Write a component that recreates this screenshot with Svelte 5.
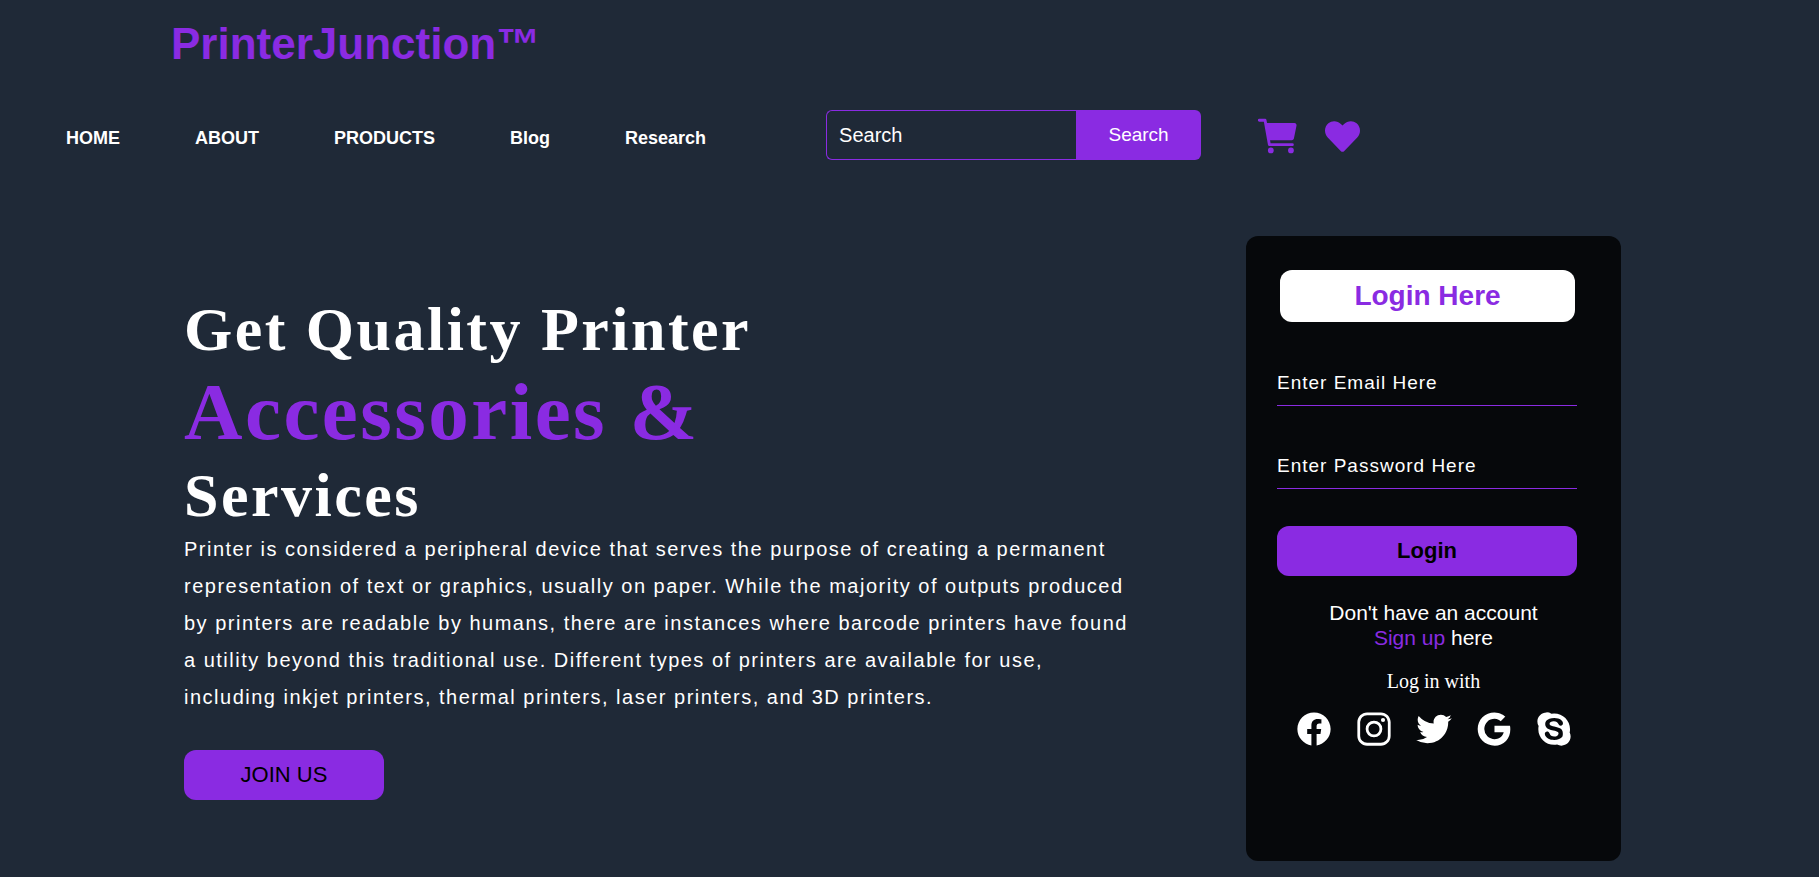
<script>
  const links = ['HOME', 'ABOUT', 'PRODUCTS', 'Blog', 'Research'];

  const socials = [
    {
      name: 'Facebook',
      path: 'M480 257.35c0-123.7-100.3-224-224-224s-224 100.3-224 224c0 111.8 81.9 204.47 189 221.29V322.12h-56.89v-64.77H221V208c0-56.13 33.45-87.16 84.61-87.16 24.51 0 50.15 4.38 50.15 4.38v55.13H327.5c-27.81 0-36.51 17.26-36.51 35v42h62.12l-9.92 64.77H291v156.54c107.1-16.81 189-109.48 189-221.31z'
    },
    {
      name: 'Instagram',
      path: 'M349.33 69.33a93.62 93.62 0 0193.34 93.34v186.66a93.62 93.62 0 01-93.34 93.34H162.67a93.62 93.62 0 01-93.34-93.34V162.67a93.62 93.62 0 0193.34-93.34h186.66m0-37.33H162.67C90.8 32 32 90.8 32 162.67v186.66C32 421.2 90.8 480 162.67 480h186.66C421.2 480 480 421.2 480 349.33V162.67C480 90.8 421.2 32 349.33 32zM377.33 162.67a28 28 0 1128-28 27.94 27.94 0 01-28 28zM256 181.33A74.67 74.67 0 11181.33 256 74.75 74.75 0 01256 181.33m0-37.33a112 112 0 10112 112 112 112 0 00-112-112z'
    },
    {
      name: 'Twitter',
      path: 'M496 109.5a201.8 201.8 0 01-56.55 15.3 97.51 97.51 0 0043.33-53.6 197.74 197.74 0 01-62.56 23.5A99.14 99.14 0 00348.31 64c-54.42 0-98.46 43.4-98.46 96.9a93.21 93.21 0 002.54 22.1 280.7 280.7 0 01-203-101.3A95.69 95.69 0 0036 130.4c0 33.6 17.53 63.3 44 80.7A97.5 97.5 0 0135.22 199v1.2c0 47 34 86.1 79 95a100.76 100.76 0 01-25.94 3.4 94.38 94.38 0 01-18.51-1.8c12.51 38.5 48.92 66.5 92.05 67.3A199.59 199.59 0 0139.5 405.6a203 203 0 01-23.5-1.4A278.68 278.68 0 00166.74 448c181.36 0 280.44-147.7 280.44-275.8 0-4.2-.11-8.4-.31-12.5A198.48 198.48 0 00496 109.5z'
    },
    {
      name: 'Google',
      path: 'M473.16 221.48l-2.26-9.59H262.46v88.22H387c-12.93 61.4-72.93 93.72-121.94 93.72-35.66 0-73.25-15-98.13-39.11a140.08 140.08 0 01-41.8-98.88c0-37.16 16.7-74.33 41-98.78s61-38.13 97.49-38.13c41.79 0 71.74 22.19 82.94 32.31l62.69-62.36C390.86 72.72 340.34 32 261.6 32c-60.75 0-119 23.27-161.58 65.71C58 139.5 36.25 199.93 36.25 256s20.58 113.48 61.3 155.6c43.51 44.92 105.13 68.4 168.58 68.4 57.73 0 112.45-22.62 151.45-63.66 38.34-40.4 58.17-96.3 58.17-154.9 0-24.67-2.48-39.32-2.59-39.96z'
    },
    {
      name: 'Skype',
      path: 'M467.16 303.6a205.69 205.69 0 004.9-45.15c0-116.32-95.69-210.7-213.79-210.7a221.83 221.83 0 00-36.52 3A123.58 123.58 0 00155.93 32C87.55 32 32 86.72 32 154.15A119.56 119.56 0 0049 216a211.16 211.16 0 00-4.32 42.35c0 116.44 95.69 210.7 213.67 210.7a214 214 0 0039.09-3.5A125.45 125.45 0 00356.07 480C424.57 480 480 425.28 480 357.97a118.63 118.63 0 00-12.84-54.37zM368 359c-9.92 13.76-24.51 24.73-43.41 32.43S283.36 403 257.69 403c-30.69 0-56.36-5.37-76.55-15.87a101 101 0 01-35.24-30.8c-9.11-12.83-13.66-25.66-13.66-38 0-7.7 3-14.35 8.87-19.95 5.84-5.37 13.42-8.17 22.29-8.17 7.35 0 13.65 2.1 18.79 6.42 4.9 4.08 9.1 10.15 12.48 18.08A108.09 108.09 0 00207 336.15c4.32 6 10.38 11 18.32 14.93 7.94 3.85 18.67 5.83 31.74 5.83 18.09 0 32.79-3.85 44-11.32 11.09-7.47 16.45-16.45 16.45-27.3 0-8.64-2.8-15.4-8.52-20.77s-13.65-9.57-23.34-12.37c-9.92-3-23.34-6.18-40-9.68-22.52-4.67-41.54-10.27-56.94-16.69-15.63-6.42-28.24-15.4-37.46-26.84-9.38-11.55-13.93-25.9-13.93-42.94 0-16.22 4.9-30.8 14.82-43.4 9.8-12.6 24-22.4 42.47-29.16 18.32-6.77 40.14-10 65.22-10 20 0 37.58 2.33 52.16 6.88s27 10.73 36.64 18.31 16.92 15.75 21.35 24.27 6.77 17 6.77 25.2c0 7.58-2.92 14.58-8.75 20.65a29.16 29.16 0 01-22 9.22c-8 0-14.35-2-18.79-5.6s-8.75-9.8-13.65-18.43c-5.83-10.85-12.83-19.37-20.89-25.44-8-6-21.23-9-39.78-9-17.15 0-31.16 3.39-41.54 10.15-10.15 6.65-15.17 14.47-15.17 23.57a20.56 20.56 0 004.44 13.19 35.27 35.27 0 0012.72 9.68 87.35 87.35 0 0016.92 6.42c5.83 1.52 15.63 4 29.16 7 17.15 3.73 32.9 7.7 46.9 12.13s26.14 9.8 36.06 16.22c10.15 6.42 18.08 14.7 23.8 24.73s8.52 22.29 8.52 36.76A86.23 86.23 0 01368 359z'
    }
  ];
</script>

<header>
  <a class="logo" href="#home">PrinterJunction™</a>
  <div class="bar">
    <nav>
      {#each links as link}
        <a href="#{link.toLowerCase()}">{link}</a>
      {/each}
    </nav>
    <form class="search" role="search">
      <input type="search" placeholder="Search" aria-label="Search" />
      <button type="button">Search</button>
    </form>
    <div class="shortcuts">
      <a href="#cart" aria-label="Cart">
        <svg class="cart" viewBox="0 0 512 512" aria-hidden="true">
          <circle cx="176" cy="416" r="32" />
          <circle cx="400" cy="416" r="32" />
          <path d="M456.8 120.78a23.92 23.92 0 00-18.56-8.78H133.89l-6.13-34.78A16 16 0 00112 64H48a16 16 0 000 32h50.58l45.66 258.78A16 16 0 00160 368h256a16 16 0 000-32H173.42l-5.64-32h241.66A24.07 24.07 0 00433 284.71l28.8-144a24 24 0 00-5-19.93z" />
        </svg>
      </a>
      <a href="#wishlist" aria-label="Wishlist">
        <svg class="heart" viewBox="0 32 512 448" aria-hidden="true">
          <path d="M462.3 62.6C407.5 15.9 326 24.3 275.7 76.2L256 96.5l-19.7-20.3C186.1 24.3 104.5 15.9 49.7 62.6c-62.8 53.6-66.1 149.8-9.9 207.9l193.5 199.8c12.5 12.9 32.8 12.9 45.3 0l193.5-199.8c56.3-58.1 53-154.3-9.8-207.9z" />
        </svg>
      </a>
    </div>
  </div>
</header>

<main>
  <section class="hero">
    <h1>Get Quality Printer <span>Accessories &amp;</span> Services</h1>
    <p>
      Printer is considered a peripheral device that serves the purpose of creating a permanent
      representation of text or graphics, usually on paper. While the majority of outputs produced
      by printers are readable by humans, there are instances where barcode printers have found a
      utility beyond this traditional use. Different types of printers are available for use,
      including inkjet printers, thermal printers, laser printers, and 3D printers.
    </p>
    <button class="join" type="button">JOIN US</button>
  </section>

  <form class="card">
    <h2>Login Here</h2>
    <input type="email" placeholder="Enter Email Here" aria-label="Email" />
    <input type="password" placeholder="Enter Password Here" aria-label="Password" />
    <button class="login" type="button">Login</button>
    <p class="signup">Don't have an account<br /><a href="#signup">Sign up</a> here</p>
    <p class="with">Log in with</p>
    <div class="socials">
      {#each socials as social}
        <a href="#{social.name.toLowerCase()}" aria-label={social.name}>
          <svg viewBox="0 0 512 512" aria-hidden="true">
            <path fill-rule="evenodd" d={social.path} />
          </svg>
        </a>
      {/each}
    </div>
  </form>
</main>

<style>
  :global(body) {
    margin: 0;
    background: #1f2937;
    color: #fff;
    font-family: Arial, 'Liberation Sans', sans-serif;
  }

  h1,
  h2,
  p {
    margin: 0;
  }

  a {
    color: inherit;
    text-decoration: none;
  }

  input,
  button {
    box-sizing: border-box;
    margin: 0;
    font-family: inherit;
    border: 0;
    outline: none;
  }

  button {
    background: #8a2be2;
    cursor: pointer;
  }

  input::placeholder {
    color: #fff;
    opacity: 1;
  }

  svg {
    display: block;
    fill: currentColor;
  }

  .logo {
    display: block;
    padding: 19px 0 0 171px;
    color: #8a2be2;
    font-size: 44px;
    line-height: 50px;
    font-weight: bold;
  }

  .bar {
    display: flex;
    align-items: center;
    margin-top: 41px;
    padding-left: 66px;
  }

  nav {
    display: flex;
    gap: 75px;
    padding-top: 6px;
    font-size: 18px;
    line-height: 20px;
    font-weight: bold;
  }

  .search {
    display: flex;
    margin-left: 120px;
  }

  .search input {
    width: 250px;
    height: 50px;
    padding: 0 12px;
    border: 1px solid #8a2be2;
    border-right: 0;
    border-radius: 6px 0 0 6px;
    background: transparent;
    color: #fff;
    font-size: 20px;
  }

  .search button {
    width: 125px;
    height: 50px;
    border-radius: 0 6px 6px 0;
    color: #fff;
    font-size: 19px;
  }

  .shortcuts {
    display: flex;
    align-items: center;
    gap: 24px;
    margin-left: 54px;
    padding-top: 2px;
    color: #8a2be2;
  }

  .cart {
    width: 46px;
    height: 46px;
  }

  .heart {
    width: 35px;
    height: 31px;
  }

  main {
    display: flex;
    justify-content: space-between;
    align-items: flex-start;
    gap: 60px;
    padding: 76px 198px 16px 184px;
  }

  .hero {
    max-width: 950px;
    padding-top: 58px;
  }

  h1 {
    max-width: 700px;
    margin-bottom: 1px;
    font-family: 'Times New Roman', 'Liberation Serif', serif;
    font-size: 62px;
    line-height: 70px;
    letter-spacing: 0.04em;
  }

  h1 span {
    display: block;
    color: #8a2be2;
    font-size: 81px;
    line-height: 96px;
  }

  .hero p {
    font-size: 20px;
    line-height: 37px;
    letter-spacing: 0.075em;
  }

  .join {
    width: 200px;
    height: 50px;
    margin-top: 34px;
    border-radius: 12px;
    color: #000;
    font-size: 22px;
  }

  .card {
    display: flex;
    flex-direction: column;
    flex: none;
    box-sizing: border-box;
    width: 375px;
    min-height: 625px;
    padding: 34px 44px 34px 31px;
    border-radius: 12px;
    background: rgba(0, 0, 0, 0.8);
  }

  h2 {
    margin: 0 2px 1px 3px;
    border-radius: 12px;
    background: #fff;
    color: #8a2be2;
    font-size: 28px;
    line-height: 52px;
    text-align: center;
  }

  .card input {
    width: 100%;
    height: 45px;
    margin-top: 38px;
    padding: 0;
    border-bottom: 1px solid #8a2be2;
    background: transparent;
    color: #fff;
    font-size: 19px;
    letter-spacing: 1px;
  }

  .login {
    height: 50px;
    margin-top: 37px;
    border-radius: 12px;
    color: #000;
    font-size: 22px;
    font-weight: bold;
  }

  .signup,
  .with {
    margin-right: -13px;
    text-align: center;
  }

  .signup {
    margin-top: 24px;
    font-size: 21px;
    line-height: 25px;
  }

  .signup a {
    color: #8a2be2;
  }

  .with {
    margin-top: 19px;
    font-family: 'Times New Roman', 'Liberation Serif', serif;
    font-size: 20px;
    line-height: 24px;
  }

  .socials {
    display: flex;
    justify-content: center;
    gap: 22px;
    margin: 17px -13px 0 0;
  }

  .socials svg {
    width: 38px;
    height: 38px;
  }
</style>
